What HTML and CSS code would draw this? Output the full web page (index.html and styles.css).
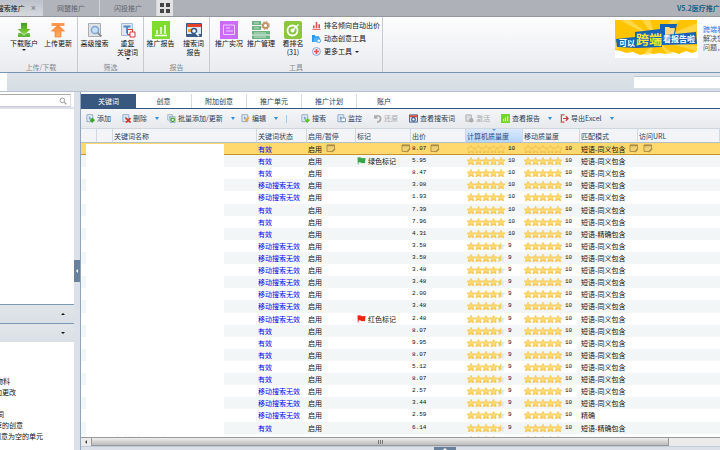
FILE: index.html
```html
<!DOCTYPE html>
<html lang="zh-CN">
<head>
<meta charset="utf-8">
<title>搜索推广</title>
<link rel="stylesheet" href="styles.css">
</head>
<body>
<svg class="defs" aria-hidden="true">
  <defs>
    <linearGradient id="gold" x1="0" y1="0" x2="0" y2="1"><stop offset="0" stop-color="#f9d060"/><stop offset=".6" stop-color="#ffdc72"/><stop offset="1" stop-color="#f0bf4c"/></linearGradient>
    <linearGradient id="green" x1="0" y1="0" x2="0" y2="1"><stop offset="0" stop-color="#3f9a22"/><stop offset="1" stop-color="#8edb3c"/></linearGradient>
    <linearGradient id="orange" x1="0" y1="0" x2="0" y2="1"><stop offset="0" stop-color="#ff8a3c"/><stop offset="1" stop-color="#ffab5e"/></linearGradient>
    <path id="star" d="M4 0.2 5.2 2.7 8 3 6.1 5 6.700 8 4 6.800 1.300 8 1.900 5 0 3 2.800 2.700z"/>
    <clipPath id="half"><rect x="0" y="0" width="4" height="9"/></clipPath>
    <symbol id="s10" viewBox="0 0 38 8"><g class="lit"><use href="#star"/><use href="#star" x="7.5"/><use href="#star" x="15"/><use href="#star" x="22.5"/><use href="#star" x="30"/></g></symbol>
    <symbol id="s9" viewBox="0 0 38 8"><g class="lit"><use href="#star"/><use href="#star" x="7.5"/><use href="#star" x="15"/><use href="#star" x="22.5"/></g><g transform="translate(30 0)"><use href="#star" fill="#dce4ec"/><use href="#star" fill="#f7cc5c" clip-path="url(#half)"/></g></symbol>
    <symbol id="edit" viewBox="0 0 10 9"><path d="M1 1h7.5v3.500L6 7.500H1z" fill="#efcf74" stroke="#b59546"/><path d="M1 1.500h8" stroke="#a98d4c" stroke-width="1.500"/><path d="M9 4 6 7.500 5.500 8.500 7 8 9.500 5z" fill="#a88a44"/></symbol>
    <symbol id="flag" viewBox="0 0 9 8"><path d="M.5 1 3 .8 5 1.800 8.500 1.500 8 6.500 5 6.800 3 5.800 1.500 6V8H.8z"/></symbol>
    <symbol id="doc" viewBox="0 0 10 10"><path d="M1 .8h6.500v7.700H1z" fill="#e3edf8" stroke="#8ba4c4"/><path d="M3.200 2.500 6 4.500 3.200 6.500z" fill="#7c9fce"/></symbol>
  </defs>
</svg>

<header class="topbar">
  <nav class="apps">
    <button class="app app-on" type="button"><span>搜索推广</span><i>×</i></button>
    <button class="app" type="button">网盟推广</button>
    <button class="app" type="button">闪投推广</button>
    <button class="app-grid" type="button" aria-label="应用"><svg viewBox="0 0 10 10"><path d="M0 0h4v4H0zM6 0h4v4H6zM0 6h4v4H0zM6 6h4v4H6z" fill="#444"/></svg></button>
  </nav>
  <span class="version">V5.2医疗推广</span>
</header>

<section class="ribbon">
  <div class="group g-load">
    <div class="tools">
      <button class="tool" type="button"><svg viewBox="0 0 16 16"><path d="M5 1h6v6h3.500L8 13 1.500 7H5z" fill="url(#green)"/><path d="M2 11.500 5 11l3 2.500L11 11l3 .5V15H2z" fill="#5fb83a"/></svg><span>下载账户</span><b class="caret"></b></button>
      <button class="tool" type="button"><svg viewBox="0 0 16 16"><path d="M1.500 1h13v3h-13z" fill="#ff9a50"/><path d="M8 3l6.500 6H11v6H5V9H1.500z" fill="url(#orange)" stroke="#ff7a30" stroke-width=".7"/></svg><span>上传更新</span></button>
    </div>
    <h2>上传/下载</h2>
  </div>
  <div class="group g-filter">
    <div class="tools">
      <button class="tool" type="button"><svg viewBox="0 0 16 16"><path d="M1.500 1.500h12v13h-12z" fill="#dfe2e5" stroke="#a9adb3"/><circle cx="8" cy="8" r="3.600" fill="#c6def5" stroke="#7fa6d3" stroke-width="1.500"/><path d="m10.500 10.500 4 4" stroke="#8f949b" stroke-width="2"/></svg><span>高级搜索</span></button>
      <button class="tool" type="button"><svg viewBox="0 0 16 16"><path d="M1.500 1.500h11v12h-11z" fill="#dfe8f5" stroke="#a5bbdb"/><path d="M3.500 4.500h7M7 4.500v7" stroke="#5686c2" stroke-width="1.800"/><path d="M7.500 7.500h5v5h-5z" fill="#fff" stroke="#d8383c"/><path d="M10 10h5v5h-5z" fill="#fff" stroke="#d8383c"/></svg><span>重复<br>关键词</span><b class="caret"></b></button>
    </div>
    <h2>筛选</h2>
  </div>
  <div class="group g-report">
    <div class="tools">
      <button class="tool" type="button"><svg class="full" viewBox="0 0 18 18"><path d="M0 0h18v18H0z" fill="#7fdb2e"/><path d="M5 13V9M9 13V6M13 13V4M3 14.500h12" stroke="#fff" stroke-width="1.400"/></svg><span>推广报告</span></button>
      <button class="tool" type="button"><svg viewBox="0 0 16 16"><path d="M.5 1.500h15v13H.5z" fill="#dce8f5" stroke="#3a5a88"/><path d="M1 2h14v3H1z" fill="#e9402c"/><path d="M2 10V7h4v3z" fill="#f2a03d"/><path d="M1 12h14v2H1z" fill="#3a5a88"/><circle cx="8" cy="9" r="2.500" fill="#fff" stroke="#345789" stroke-width="1.500"/><path d="m10 11 3 3" stroke="#fff" stroke-width="1.500"/></svg><span>搜索词<br>报告</span></button>
    </div>
    <h2>报告</h2>
  </div>
  <div class="group g-tools">
    <div class="tools">
      <button class="tool" type="button"><svg class="full" viewBox="0 0 18 18"><path d="M0 0h18v18H0z" fill="#cc6bfa"/><path d="M3.500 4h11v9.500h-11z" fill="none" stroke="#efcfff"/><path d="M6 7h4M6 10h7" stroke="#efcfff" stroke-width="1.200"/></svg><span>推广实况</span></button>
      <button class="tool" type="button"><svg class="full" viewBox="0 0 18 18"><path d="M0 0h9v4H0zM0 5h9v4H0zM0 10h18v3.500H0zM0 14.500h18V18H0z" fill="#6db383"/><path d="M2 2h5M2 7h5M2 12h12M2 16h12" stroke="#d5f0dc" stroke-width=".8"/><circle cx="13.500" cy="4.500" r="2.500" fill="#fff" stroke="#c09468" stroke-width="2"/><circle cx="13.500" cy="4.500" r="3.900" fill="none" stroke="#c09468" stroke-dasharray="1.600 1.460"/></svg><span>推广管理</span></button>
      <button class="tool" type="button"><svg class="full" viewBox="0 0 18 18"><rect width="18" height="18" rx="2" fill="#8cc63f"/><circle cx="8.500" cy="9.500" r="5" fill="none" stroke="#fff" stroke-width="1.800"/><circle cx="8.500" cy="9.500" r="2" fill="#fff"/><path d="m9 9 5.500-5.500" stroke="#fff" stroke-width="1.500"/></svg><span>看排名<br>(31)</span></button>
      <ul class="links">
        <li><svg viewBox="0 0 10 10"><path d="M.5 9.300h9" stroke="#d9534a"/><path d="M2 8V5M5 8V1M8 8V3.500" stroke="#d9534a" stroke-width="1.800"/></svg><a href="#">排名倾向自动出价</a></li>
        <li><svg viewBox="0 0 10 10"><path d="M0 1h3l1 1.500h4V9H0z" fill="#2b98ee"/><path d="M2 4h7l-1 5H2z" fill="#54b4fb"/><circle cx="7.500" cy="7.500" r="2" fill="#fff" stroke="#2b98ee"/></svg><a href="#">动态创意工具</a></li>
        <li><svg viewBox="0 0 10 10"><circle cx="5" cy="5" r="4.400" fill="#eef3fa" stroke="#7c9ccc"/><path d="M5 2.300v5.400M2.300 5h5.400" stroke="#e2504c" stroke-width="1.800"/></svg><a href="#">更多工具</a><b class="caret"></b></li>
      </ul>
    </div>
    <h2>工具</h2>
  </div>
  <aside class="promo">
    <svg class="banner" viewBox="0 0 83 38" role="img" aria-label="可以跨端看报告啦">
      <path d="M0 0h83v38H0z" fill="#fff"/>
      <path d="M0 0h82v31l-5 2-6-2-7 3-7-2-6 2-7-1-5 1-6-1-8 2-7-3-7 1-5-2-6-1z" fill="#ffc400"/>
      <path d="M41 20 5 0h10zM41 20 27 0h8zM41 20 56 0h9zM41 20 82 3v8zM41 20 82 26v5zM41 20 0 22v7zM41 20 28 35h7zM41 20 52 34h6z" fill="#ffe06a" opacity=".65"/>
      <path d="M1 19 20 17 20 12 45 9 45 4 62 4 60 14 81 12 82 24 47 25 47 27 21 28 2 27z" fill="#1463b8"/>
      <path d="M50 7h4l1 1h5l-1 6-9 1z" fill="#ffd88a"/>
      <text x="4" y="26" font-size="8" fill="#fff">可以</text>
      <text x="21" y="24" font-size="13" fill="#ffe833">跨端</text>
      <text x="48" y="22" font-size="8" fill="#fff">看报告啦</text>
    </svg>
    <div class="promo-text"><a href="#">跨端看报告</a><p>解决您的<br>问题，更</p></div>
  </aside>
</section>

<div class="band"><span class="notch"></span><input class="band-box" type="text" aria-label="查找"></div>

<main class="main">
  <aside class="side">
    <label class="search"><input type="text" aria-label="搜索"><svg viewBox="0 0 10 10"><circle cx="4.200" cy="4.200" r="2.900" fill="none" stroke="#999" stroke-width="1.200"/><path d="m6.400 6.400 2.800 2.800" stroke="#999" stroke-width="1.600"/></svg></label>
    <div class="tree"></div>
    <button class="fold up" type="button" aria-label="收起"><i></i></button>
    <button class="fold down" type="button" aria-label="展开"><i></i></button>
    <ul class="quick">
      <li>关键词物料</li><li>未上传的添加更改</li><li></li><li>不宜推广关键词</li><li>未审核不宜推荐的创意</li><li>推广关键词或者创意为空的单元</li>
    </ul>
  </aside>
  <button class="splitter" type="button" aria-label="折叠侧栏"><i></i></button>
  <section class="content">
    <nav class="tabs">
      <button class="on" type="button">关键词</button><button type="button">创意</button><button type="button">附加创意</button><button type="button">推广单元</button><button type="button">推广计划</button><button type="button">账户</button>
    </nav>
    <div class="bar">
      <button class="b-add" type="button"><svg viewBox="0 0 10 10"><use href="#doc" width="10" height="10"/><path d="M7 4.500v5M4.500 7h5" stroke="#37a51e" stroke-width="2.200"/></svg>添加</button>
      <button class="b-del" type="button"><svg viewBox="0 0 10 10"><use href="#doc" width="10" height="10"/><path d="m4.500 4.500 5 5m0-5-5 5" stroke="#dc3020" stroke-width="1.900"/></svg>删除<i></i></button>
      <button class="b-batch" type="button"><svg viewBox="0 0 10 10"><use href="#doc" width="8" height="8"/><path d="M3.500 3h5.500v6.500H3.500z" fill="#edf7ea" stroke="#7b9dbd" stroke-width=".8"/><circle cx="6.300" cy="6.500" r="2" fill="none" stroke="#3ea52b" stroke-width="1.400"/></svg>批量添加/更新<i></i></button>
      <button class="b-edit" type="button"><svg viewBox="0 0 10 10"><use href="#doc" width="10" height="10"/><path d="m4 8.500.5-2L8 3l1.500 1.500L6 8z" fill="#f0a437"/></svg>编辑<i></i></button>
      <button class="b-find" type="button"><svg viewBox="0 0 10 10"><use href="#doc" width="10" height="10"/><path d="M7 4v3M4.500 6.500 7 9.500l2.500-3z" fill="#5fc41e" stroke="#5fc41e"/></svg>搜索</button>
      <button class="b-watch" type="button"><svg viewBox="0 0 10 10"><use href="#doc" width="10" height="10"/><path d="M4.500 4.500h5v4h-5z" fill="#fff" stroke="#728fb8"/></svg>监控</button>
      <button class="b-undo" type="button" disabled><svg viewBox="0 0 10 10"><path d="M2 5V1.500M1.500 4.500 5 4M2 4C4 .5 9 2 8.500 5.500 8.200 8 6 9 4.500 9" fill="none" stroke="#aaa" stroke-width="1.800"/></svg>还原</button>
      <button class="b-query" type="button"><svg viewBox="0 0 10 10"><path d="M.5 1h9v8h-9z" fill="#d8e4f2" stroke="#34547f"/><path d="M1 1.500h8v2H1z" fill="#e1442f"/><circle cx="5" cy="6" r="2" fill="#fff" stroke="#34547f" stroke-width="1.300"/></svg>查看搜索词</button>
      <button class="b-live" type="button" disabled><svg viewBox="0 0 10 10"><path d="M1 1h6v7H1z" fill="#ddd" stroke="#aaa"/><circle cx="7" cy="7" r="2.500" fill="#aaa"/></svg>激活</button>
      <button class="b-report" type="button"><svg viewBox="0 0 10 10"><path d="M0 0h10v10H0z" fill="#76d52b"/><path d="M3 8V5.500M5 8V4M7.500 8V2.500" stroke="#fff"/></svg>查看报告<i></i></button>
      <button class="b-xls" type="button"><svg viewBox="0 0 10 10"><path d="M5 1H1.500v8H5" fill="none" stroke="#c65656" stroke-width="1.400"/><path d="M3.500 5H9M6.500 2.500 9 5 6.500 7.500" fill="none" stroke="#c03c3c" stroke-width="1.300"/></svg>导出Excel<i></i></button>
    </div>
    <div class="grid">
      <table>
        <colgroup><col class="c1"><col class="c1"><col class="c-name"><col class="c-state"><col class="c-on"><col class="c-mark"><col class="c-price"><col class="c-pc"><col class="c-mob"><col class="c-match"><col></colgroup>
        <thead><tr><th></th><th></th><th>关键词名称</th><th>关键词状态</th><th>启用/暂停</th><th>标记</th><th>出价</th><th class="sorted">计算机质量度</th><th>移动质量度</th><th>匹配模式</th><th>访问URL</th></tr></thead>
        <tbody id="rows"></tbody>
      </table>
      <div class="mask"></div>
    </div>
    <div class="hscroll"><span class="arrow"></span><span class="thumb"><i></i></span></div>
    <div class="foot"><button type="button" aria-label="展开详情"><i></i></button></div>
  </section>
</main>
<script src="rows.js"></script>
</body>
</html>
```
FILE: rows.js
```js
// [state, price, desktop quality, match mode, mark colour]
var V = '有效', M = '移动搜索无效', S = '短语-同义包含', J = '短语-精确包含';
var rows = [
  [V, '8.07', 10, S], [V, '5.95', 10, S, 'green'], [V, '8.47', 10, S], [M, '3.08', 10, S],
  [M, '1.93', 10, S], [V, '7.39', 10, S], [V, '7.96', 10, S], [V, '4.31', 10, J],
  [M, '3.58', 9, S], [M, '3.58', 9, S], [M, '3.48', 9, S], [M, '3.48', 9, S],
  [M, '2.00', 9, S], [M, '3.48', 9, S], [M, '2.48', 9, S, 'red'], [V, '8.07', 9, S],
  [V, '9.95', 9, S], [V, '8.07', 9, S], [V, '5.12', 9, S], [V, '8.07', 9, S],
  [M, '2.57', 9, S], [M, '3.44', 9, S], [M, '2.59', 9, '精确'], [V, '6.14', 9, J],
  [V, '5.20', 9, S]
];
function stars(n) {
  return '<div class="q"><svg class="stars"><use href="#s' + n + '"/></svg><span>' + n + '</span></div>';
}
var pen = '<svg class="pen"><use href="#edit"/></svg>';
document.getElementById('rows').innerHTML = rows.map(function (r, i) {
  var first = i === 0;
  var mark = r[4] ? '<svg class="flag ' + r[4] + '"><use href="#flag"/></svg>' + (r[4] === 'red' ? '红色标记' : '绿色标记') : '';
  return '<tr' + (first ? ' class="picked"' : '') + '><td></td><td></td><td>' + (i === 24 ? '本地搜索关键词推' : '') +
    '</td><td><a href="#">' + r[0] + '</a></td><td>启用' + (first ? pen : '') +
    '</td><td' + (first ? ' class="end"' : '') + '>' + mark + (first ? pen : '') +
    '</td><td class="num">' + r[1] + (first ? pen : '') + '</td><td>' + stars(r[2]) + '</td><td>' + stars(10) +
    '</td><td>' + r[3] + (first ? pen : '') + '</td><td>' + (first ? pen : '') + '</td></tr>';
}).join('');
```
FILE: styles.css
```css
* { box-sizing: border-box; }
html, body { height: 100%; }
body {
  margin: 0;
  display: flex;
  flex-direction: column;
  overflow: hidden;
  background: #fff;
  color: #111;
  font: 7px/9px "Noto Sans CJK SC", "Liberation Sans", sans-serif;
}
button, input { font: inherit; color: inherit; border: 0; padding: 0; margin: 0; background: none; border-radius: 0; }
button { white-space: nowrap; }
a { color: inherit; text-decoration: none; }
ul, h2, p { margin: 0; padding: 0; list-style: none; font: inherit; }
svg { display: block; flex: none; }
.defs { position: absolute; width: 0; height: 0; }
.lit { fill: url(#gold); stroke: var(--edge, #f2bd42); stroke-width: .5; }
.caret { width: 0; height: 0; border: 2px solid transparent; border-top-color: #222; border-bottom: 0; }

.topbar { display: flex; justify-content: space-between; flex: none; height: 17px; background: #afb1b9; border-bottom: 1px solid #92969f; overflow: hidden; }
.apps { display: flex; }
.app { width: 57px; border-right: 1px solid #d0d3d8; color: #5f646d; background: #b2b4bc; }
.app-on { width: 43px; display: flex; align-items: center; justify-content: flex-end; gap: 6px; padding-right: 7px; background: linear-gradient(#bcc1ca, #d5d9df); color: #111; border: 0; }
.app-on i { font: 9px/9px "Liberation Sans", sans-serif; color: #777; }
.app-grid { width: 16px; background: #e2e2e2; display: flex; align-items: center; justify-content: center; }
.app-grid svg { width: 10px; height: 10px; }
.version { width: 43px; white-space: nowrap; color: #15658e; font-weight: bold; line-height: 17px; }

.ribbon { display: flex; flex: none; height: 56px; background: linear-gradient(#fdfdfe, #e9ebef); border-bottom: 1px solid #7595b4; }
.group { display: flex; flex-direction: column; justify-content: space-between; border-right: 1px solid #c6cad0; padding-top: 4px; }
.group h2 { text-align: center; color: #868a90; line-height: 9px; }
.g-load { width: 78px; padding-left: 5px; }
.g-filter, .g-report { width: 66px; }
.g-tools { width: 173px; }
.tools { display: flex; height: 42px; }
.tool { flex: 0 0 33px; display: flex; flex-direction: column; align-items: center; justify-content: flex-start; line-height: 9px; }
.g-load .tool { flex-basis: 34px; }
.g-load .tools { padding-left: 2px; }
.g-tools .tool { flex-basis: 32px; }
.g-tools .tools { padding-left: 3px; }
.tool svg { width: 16px; height: 18px; }
.tool svg.full { width: 18px; }
.tool .caret { margin-top: 1px; }
.links { display: flex; flex-direction: column; gap: 4px; padding-left: 3px; white-space: nowrap; }
.links li { display: flex; align-items: center; gap: 3px; height: 9px; }
.links svg { width: 9px; height: 9px; }
.promo { margin-left: auto; flex: 0 0 105px; display: flex; gap: 5px; padding-top: 3px; overflow: hidden; }
.banner { width: 83px; height: 38px; font-weight: bold; }
.promo-text { padding-top: 5px; white-space: nowrap; color: #555; }
.promo-text a { color: #2f80e0; }

.band { display: flex; justify-content: space-between; flex: none; height: 19px; background: linear-gradient(#dde3e8, #d6dde3); border-bottom: 1px solid #b5c1d1; }
.notch { width: 7px; background: #fff; }
.band-box { width: 86px; height: 12px; margin-top: 3px; background: #fff; border-top: 1px solid #bbc6d2; }

.main { display: flex; flex: 1; min-height: 0; background: #dce0e9; }
.side { width: 74px; display: flex; flex-direction: column; background: #fff; }
.search { display: flex; align-items: center; height: 13px; margin: 2px 3px 0 0; border-top: 1px solid #aaa; border-bottom: 1px solid #ccd; border-right: 1px solid #ddd; padding-right: 3px; }
.search input { flex: 1; min-width: 0; }
.search svg { width: 8px; height: 8px; }
.tree { flex: 1; border-top: 2px solid #dce0e9; }
.fold { height: 19px; flex: none; display: flex; align-items: center; justify-content: flex-end; padding-right: 9px; background: linear-gradient(#e1e6e9, #d9dfe5); border-top: 1px solid #7f98b2; }
.fold i { width: 0; height: 0; border: 2px solid transparent; }
.up i { border-bottom-color: #111; border-top: 0; }
.down i { border-top-color: #111; border-bottom: 0; }
.quick { height: 108px; padding-top: 34px; overflow: hidden; flex: none; }
.quick li { height: 11px; line-height: 11px; display: flex; justify-content: flex-end; white-space: nowrap; }
.quick li:nth-child(1) { width: 10px; }
.quick li:nth-child(2) { width: 16px; }
.quick li:nth-child(4) { width: 4px; }
.quick li:nth-child(5) { width: 23px; }
.quick li:nth-child(6) { width: 43px; }
.splitter { width: 7px; flex: none; display: flex; align-items: center; border-right: 1px solid #92a5bf; }
.splitter i { width: 6px; height: 22px; background: #68819c; display: flex; align-items: center; justify-content: center; }
.splitter i::before { content: ""; border: 2px solid transparent; border-right-color: #fff; border-left: 0; }

.content { flex: 1; min-width: 0; display: flex; flex-direction: column; }
.tabs { display: flex; height: 17px; padding-top: 2px; flex: none; background: #fff; border-bottom: 1px solid #34557f; }
.tabs button { width: 55px; color: #243a55; display: flex; align-items: center; justify-content: center; }
.tabs button + button + button { border-left: 1px solid #d5dae0; }
.tabs .on { background: #38587f; color: #fff; }

.bar { display: flex; height: 20px; flex: none; background: linear-gradient(#f5f6f8, #e6e9ed); border-bottom: 1px solid #cfd6de; padding-left: 5px; }
.bar button { display: flex; align-items: center; gap: 2px; flex: none; color: #2d3e55; }
.bar button:disabled { color: #a6a9ad; }
.bar svg { width: 9px; height: 9px; }
.bar i { border: 2px solid transparent; border-top: 3px solid #2f8fe0; border-bottom: 0; margin-left: 6px; }
.b-add { width: 36px; }
.b-del { width: 45px; }
.b-batch { width: 74px; }
.bar .b-edit { width: 46px; }
.bar .b-find { width: 36px; margin-left: 14px; position: relative; }
.b-find::before { content: ""; position: absolute; left: -15px; width: 1px; height: 8px; background: #9dccee; }
.b-watch { width: 36px; }
.b-undo { width: 36px; }
.b-query { width: 56px; }
.b-live { width: 36px; }
.b-report { width: 59px; }

.grid { flex: 1; min-height: 0; overflow: hidden; position: relative; background: #fff; }
.grid table { width: 100%; height: 317px; table-layout: fixed; border-collapse: separate; border-spacing: 0; }
.c1 { width: 16px; }
.c-name { width: 144px; }
.c-state { width: 50px; }
.c-on { width: 49px; }
.c-mark { width: 55px; }
.c-price { width: 55px; }
.c-pc { width: 57px; }
.c-mob { width: 57px; }
.c-match { width: 58px; }
th, td { padding: 0 0 0 1px; text-align: left; white-space: nowrap; font-weight: normal; line-height: 10px; vertical-align: middle; overflow: hidden; }
th { height: 14px; background: #f2f4f7; border-right: 1px solid #d2d8e0; border-bottom: 1px solid #b8bec6; color: #2b3e58; }
th.sorted { position: relative; background: linear-gradient(#d9e9fd, #b9d5fa); color: #1e4784; }
.sorted::after { content: ""; position: absolute; left: 26px; top: 0; border: 2px solid transparent; border-top-color: #6f9fd0; border-bottom: 0; }
tbody tr:nth-child(even) { background: #f2f6f7; }
tbody td { padding-left: 1px; height: 12px; }
tbody a { color: #0000f0; }
tbody .picked { background: #ffd86e; --edge: #e5b23f; }
.picked td { border-bottom: 1px solid #c79333; }
.num { font: 6px/10px "Liberation Mono", monospace; }
.q { display: flex; align-items: center; gap: 3px; font: 6px/10px "Liberation Mono", monospace; }
.stars { width: 38px; height: 8px; }
.pen { display: inline-block; width: 10px; height: 9px; vertical-align: top; margin-left: 4px; }
td.end { text-align: right; }
.flag { display: inline-block; width: 9px; height: 9px; vertical-align: top; margin-right: 2px; }
.green { fill: #35a845; }
.red { fill: #f02410; }
.mask { position: absolute; left: 5px; top: 15px; bottom: 1px; width: 138px; background: #fff; }

.hscroll { display: flex; height: 9px; flex: none; background: #ebebeb; border-top: 1px solid #999; }
.arrow { width: 10px; display: flex; align-items: center; justify-content: center; }
.arrow::before { content: ""; border: 2px solid transparent; border-right-color: #444; border-left: 0; }
.thumb { flex: 0 1 578px; margin-right: 51px; border: 1px solid #999; border-top: 0; background: linear-gradient(#eee, #bbb); display: flex; align-items: center; justify-content: center; }
.thumb i { width: 5px; height: 4px; background: repeating-linear-gradient(90deg, #777 0 1px, transparent 1px 2px); }
.foot { height: 4px; flex: none; display: flex; justify-content: center; padding-left: 89px; overflow: hidden; border-top: 1px solid #c3cbd6; }
.foot button { width: 22px; height: 3px; background: #68819c; display: flex; justify-content: center; }
.foot i { border: 2px solid transparent; border-bottom-color: #fff; border-top: 0; }
```
